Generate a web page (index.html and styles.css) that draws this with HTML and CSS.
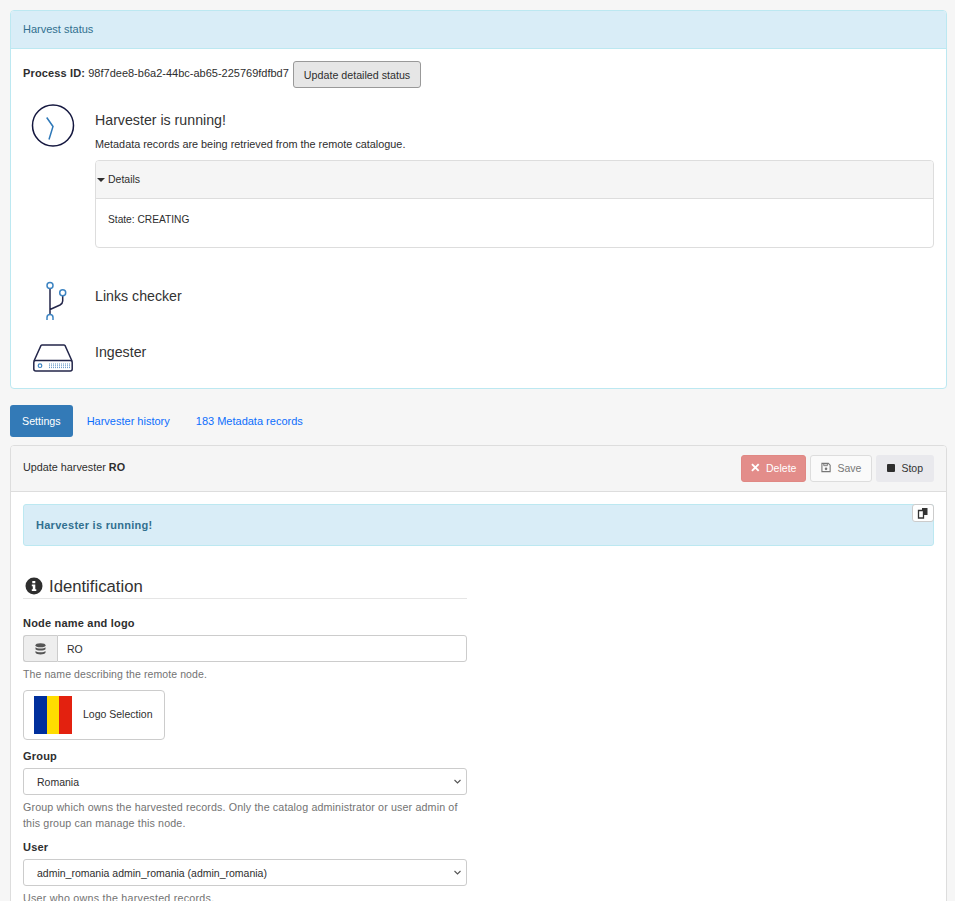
FILE: index.html
```html
<!DOCTYPE html>
<html lang="en">
<head>
<meta charset="utf-8">
<title>Harvester</title>
<link rel="stylesheet" href="styles.css">
</head>
<body>
<section class="panel status-panel">
  <header class="status-head">Harvest status</header>
  <div class="status-body">
    <div class="process-row"><span class="pid-line"><b>Process ID:</b> 98f7dee8-b6a2-44bc-ab65-225769fdfbd7</span> <button class="btn-update">Update detailed status</button></div>
    <div class="step step-run">
      <div class="step-icon">
        <svg width="44" height="44" viewBox="0 0 44 44"><circle cx="22" cy="21.500" r="20.500" fill="none" stroke="#14173f" stroke-width="1.500"/><path d="M15.700 13.500L22 22.500L18 35.500" fill="none" stroke="#2e78b8" stroke-width="1.500"/></svg>
      </div>
      <div class="step-main">
        <h4 class="step-title">Harvester is running!</h4>
        <p class="step-text">Metadata records are being retrieved from the remote catalogue.</p>
        <div class="details">
          <div class="details-head"><span class="caret"></span>Details</div>
          <div class="details-body">State: CREATING</div>
        </div>
      </div>
    </div>
    <div class="step step-links">
      <div class="step-icon">
        <svg width="44" height="40" viewBox="0 0 44 40"><path d="M19 8V36M19 29.500L29 25Q31.700 23.500 31.700 21V15.500" fill="none" stroke="#23264a" stroke-width="1.500"/><circle cx="19" cy="5.500" r="3" fill="#fff" stroke="#3d84c2" stroke-width="1.500"/><circle cx="31.700" cy="12.800" r="3" fill="#fff" stroke="#3d84c2" stroke-width="1.500"/><path d="M16 40V37.500a3 3 0 0 1 6 0V40" fill="#fff" stroke="#3d84c2" stroke-width="1.500"/></svg>
      </div>
      <h4 class="step-title">Links checker</h4>
    </div>
    <div class="step step-ingest">
      <div class="step-icon">
        <svg width="44" height="32" viewBox="0 0 44 32"><path d="M3 20L10 4.500Q10.500 4 11 4H33Q33.500 4 34 4.500L41 20" fill="none" stroke="#23264a" stroke-width="1.500"/><rect x="2.800" y="19.500" width="38.400" height="10.500" rx="2" fill="#fff" stroke="#23264a" stroke-width="1.500"/><circle cx="9" cy="24.700" r="1.800" fill="none" stroke="#3d84c2" stroke-width="1.200"/><path d="M18 23H39M18 24.800H39M18 26.600H39" stroke="#5c92c5" stroke-width="1" stroke-dasharray="1 1"/></svg>
      </div>
      <h4 class="step-title">Ingester</h4>
    </div>
  </div>
</section>

<nav class="tabs">
  <a class="tab active">Settings</a>
  <a class="tab">Harvester history</a>
  <a class="tab">183 Metadata records</a>
</nav>

<section class="panel editor-panel">
  <header class="editor-head">
    <div class="editor-title">Update harvester <b>RO</b></div>
    <div class="actions">
      <button class="act act-delete"><svg width="9" height="9" viewBox="0 0 9 9"><path d="M1 1L8 8M8 1L1 8" stroke="#fff" stroke-width="2"/></svg>Delete</button>
      <button class="act act-save"><svg width="11" height="11" viewBox="0 0 11 11"><path d="M1 1H8L10 3V10H1Z" fill="none" stroke="#777" stroke-width="1.200"/><path d="M3 1.500H7V3.500H3Z" fill="none" stroke="#777"/><circle cx="5.500" cy="7" r="1.400" fill="#777"/></svg>Save</button>
      <button class="act act-stop"><span class="stop-sq"></span>Stop</button>
    </div>
  </header>
  <div class="editor-body">
    <div class="alert"><b>Harvester is running!</b>
      <button class="copy"><svg width="12" height="12" viewBox="0 0 12 12"><path d="M5 1H10.500V8H5Z" fill="#333"/><path d="M1.500 3.500H6.500V11H1.500Z" fill="#fff" stroke="#333" stroke-width="1.300"/></svg></button>
    </div>
    <form class="form">
      <h2 class="legend"><svg width="18" height="18" viewBox="0 0 18 18"><circle cx="9" cy="9" r="8.500" fill="#2e2e2e"/><path d="M7.300 4H10.300V6.200H7.300ZM6.800 7.500H10.300V12.300H11.300V14H6.800V12.300H7.800V9.200H6.800Z" fill="#fff"/></svg>Identification</h2>
      <div class="field">
        <label class="label">Node name and logo</label>
        <div class="input-group">
          <span class="addon"><svg width="11" height="12" viewBox="0 0 11 12"><ellipse cx="5.500" cy="2.300" rx="5" ry="2" fill="#555"/><path d="M.5 4.200C1.500 6 9.500 6 10.500 4.200V6.200C9.500 8 1.500 8 .5 6.200ZM.5 8C1.500 9.800 9.500 9.800 10.500 8V9.700C9.500 12 1.500 12 .5 9.700Z" fill="#555"/></svg></span>
          <span class="input">RO</span>
        </div>
        <p class="help help-short">The name describing the remote node.</p>
        <button class="logo-btn" type="button">
          <span class="flag"><i class="f-blue"></i><i class="f-yellow"></i><i class="f-red"></i></span>
          <span class="logo-text">Logo Selection</span>
        </button>
      </div>
      <div class="field">
        <label class="label">Group</label>
        <div class="select">Romania<svg width="7" height="5" viewBox="0 0 7 5"><path d="M.5 1L3.500 4L6.500 1" fill="none" stroke="#555" stroke-width="1.100"/></svg></div>
        <p class="help">Group which owns the harvested records. Only the catalog administrator or user admin of this group can manage this node.</p>
      </div>
      <div class="field">
        <label class="label">User</label>
        <div class="select">admin_romania admin_romania (admin_romania)<svg width="7" height="5" viewBox="0 0 7 5"><path d="M.5 1L3.500 4L6.500 1" fill="none" stroke="#555" stroke-width="1.100"/></svg></div>
        <p class="help help-user">User who owns the harvested records.</p>
      </div>
    </form>
  </div>
</section>
</body>
</html>
```
FILE: styles.css
```css
* { box-sizing: border-box; }
html, body { margin: 0; height: 901px; overflow: hidden; }
body {
  padding: 10px 8px 0 10px;
  background: #f6f6f6;
  font-family: "Liberation Sans", Arial, sans-serif;
  font-size: 11px;
  line-height: 16px;
  color: #2e2e2e;
}
button { font-family: inherit; font-size: 10.5px; }
.panel { border-radius: 4px; background: #fff; border: 1px solid #ddd; }
.status-panel { height: 379px; border-color: #bce8f1; }
.status-head {
  height: 38px;
  padding: 10px 12px;
  background: #d9edf7;
  border-bottom: 1px solid #bce8f1;
  border-radius: 3px 3px 0 0;
  color: #31708f;
}
.status-body { padding: 12px; }
.process-row { display: flex; align-items: flex-start; height: 27px; gap: 4px; }
.pid-line { padding-top: 4px; }
.pid-line b { letter-spacing: 0.150px; }
.btn-update {
  height: 27px;
  padding: 0 10px;
  background: #e6e6e6;
  border: 1px solid #999;
  border-radius: 3px;
  font-size: 10.700px;
  color: #2e2e2e;
}
.step { display: flex; }
.step-icon { flex: 0 0 72px; display: flex; justify-content: center; padding-right: 12px; }
.step-main { flex: 1; min-width: 0; }
.step-title { margin: 0; font-size: 14.200px; font-weight: 400; line-height: 20px; color: #333; }
.step-text { margin: 6px 0 8px; font-size: 10.850px; }
.step-run { margin-top: 16px; }
.step-run .step-title { margin-top: 6px; }
.details { height: 88px; border: 1px solid #ddd; border-radius: 4px; font-size: 10.500px; }
.details-head {
  height: 38px;
  padding: 10px 1px;
  background: #f5f5f5;
  border-bottom: 1px solid #ddd;
  border-radius: 3px 3px 0 0;
}
.caret {
  display: inline-block;
  margin-right: 3px;
  border: 4px solid transparent;
  border-top-color: #2e2e2e;
  border-bottom-width: 0;
  vertical-align: 1px;
}
.details-body { padding: 13px 12px 12px; font-size: 10.200px; }
.step-links { margin-top: 32px; align-items: center; height: 40px; }
.step-links .step-title { margin-top: -9px; }
.step-ingest { margin-top: 21px; height: 32px; align-items: center; }
.step-ingest .step-title { margin-top: -11px; }
.tabs { display: flex; gap: 2px; margin-top: 16px; height: 32px; }
.tab { padding: 8px 12px; border-radius: 3px; color: #0d6efd; }
.tab.active { background: #337ab7; color: #fff; font-size: 10.700px; }
.editor-panel { margin-top: 8px; height: 500px; }
.editor-head {
  display: flex;
  justify-content: space-between;
  align-items: center;
  height: 46px;
  padding: 0 12px;
  background: #f5f5f5;
  border-bottom: 1px solid #ddd;
  border-radius: 3px 3px 0 0;
}
.editor-title { margin-top: -3px; font-size: 10.800px; }
.actions { display: flex; gap: 4px; margin-top: -1px; }
.act {
  display: flex;
  align-items: center;
  gap: 6px;
  height: 27px;
  padding: 0 10px 1px;
  border: 1px solid transparent;
  border-radius: 3px;
}
.act-delete { width: 65px; padding: 0 9px 1px; background: #e38d8a; border-color: #e08884; color: #fff; }
.act-save { width: 62px; background: #fafafa; border-color: #ddd; color: #777; }
.act-stop { background: #e9e9ed; color: #333; }
.stop-sq { width: 8px; height: 8px; background: #2e2e2e; border-radius: 1px; }
.editor-body { padding: 12px; }
.alert {
  position: relative;
  height: 42px;
  padding: 12px;
  background: #d9edf7;
  border: 1px solid #bce8f1;
  border-radius: 3px;
  color: #31708f;
}
.alert b { letter-spacing: 0.280px; }
.copy {
  position: absolute;
  top: -1px;
  right: -1px;
  display: flex;
  align-items: center;
  justify-content: center;
  width: 22px;
  height: 18px;
  padding: 0;
  background: #fff;
  border: 1px solid #ccc;
  border-radius: 3px;
}
.form { width: 444px; }
.legend {
  display: flex;
  align-items: flex-end;
  gap: 6px;
  height: 34px;
  margin: 19px 0 16px;
  padding: 0 0 1px 2px;
  border-bottom: 1px solid #e5e5e5;
  font-size: 16.700px;
  line-height: 20px;
  font-weight: 400;
  color: #333;
}
.legend svg { margin-bottom: 2px; }
.field { margin-bottom: 8px; }
.label { display: block; font-weight: 700; letter-spacing: 0.2px; margin-bottom: 4px; line-height: 16px; }
.input-group { display: flex; height: 27px; }
.addon {
  display: flex;
  align-items: center;
  justify-content: center;
  width: 34px;
  background: #eee;
  border: 1px solid #ccc;
  border-right: 0;
  border-radius: 3px 0 0 3px;
}
.input {
  flex: 1;
  padding: 5px 9px;
  background: #fff;
  border: 1px solid #ccc;
  border-radius: 0 3px 3px 0;
  font-size: 10.500px;
}
.help { margin: 4px 0 0; color: #737373; letter-spacing: 0.140px; font-size: 10.700px; }
.help-short { letter-spacing: 0.1px; font-size: 10.500px; }
.help-user { letter-spacing: 0.250px; }
.logo-btn {
  display: flex;
  align-items: center;
  gap: 11px;
  width: 142px;
  height: 50px;
  margin-top: 8px;
  padding: 0 10px;
  background: #fff;
  border: 1px solid #ccc;
  border-radius: 4px;
  color: #2e2e2e;
}
.logo-text { padding-bottom: 2px; }
.flag { display: flex; width: 38px; height: 38px; }
.flag i { flex: 1; }
.f-blue { background: #002f9c; }
.f-yellow { background: #ffdd00; }
.f-red { background: #e3210f; }
.select {
  display: flex;
  justify-content: space-between;
  align-items: center;
  height: 27px;
  padding: 0 5px 0 13px;
  background: #fff;
  border: 1px solid #ccc;
  border-radius: 3px;
  font-size: 10.500px;
}
```
